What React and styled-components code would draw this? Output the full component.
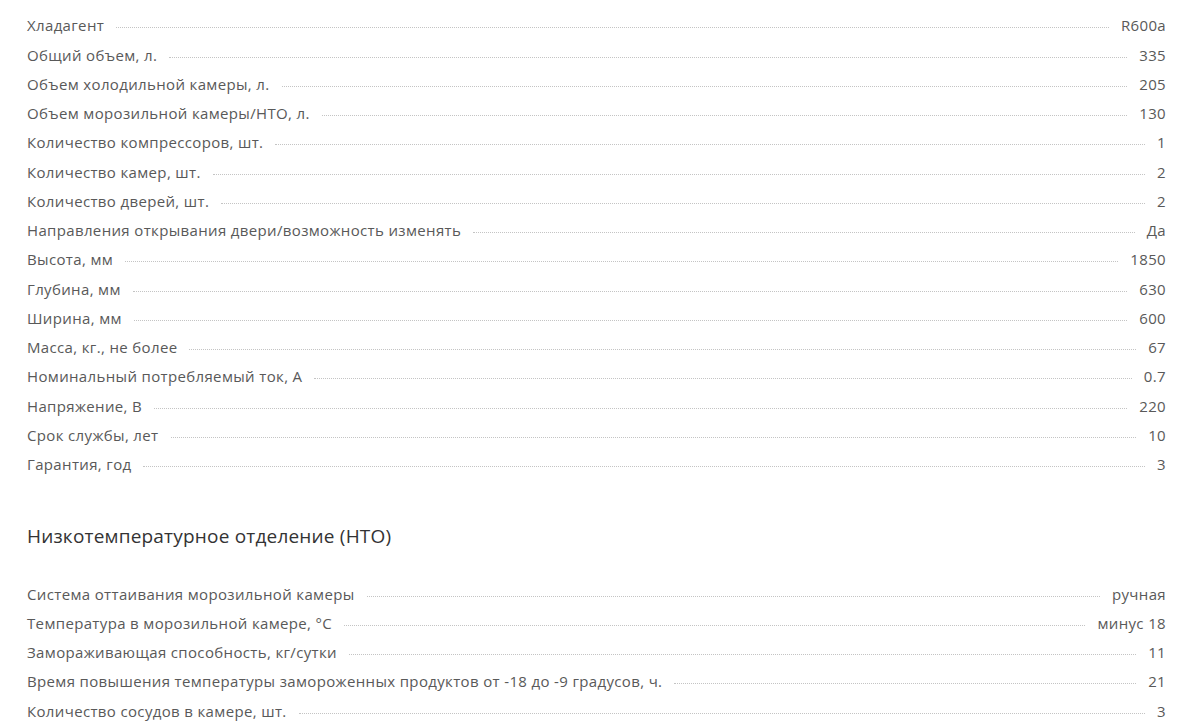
import React from 'react'
import styled, { createGlobalStyle } from 'styled-components'

const GlobalStyle = createGlobalStyle`
  body {
    margin: 0;
    background: #fff;
    font-family: "Open Sans", "Liberation Sans", sans-serif;
  }
`;

const mainSpecs = [
  ['Хладагент', 'R600a'],
  ['Общий объем, л.', '335'],
  ['Объем холодильной камеры, л.', '205'],
  ['Объем морозильной камеры/НТО, л.', '130'],
  ['Количество компрессоров, шт.', '1'],
  ['Количество камер, шт.', '2'],
  ['Количество дверей, шт.', '2'],
  ['Направления открывания двери/возможность изменять', 'Да'],
  ['Высота, мм', '1850'],
  ['Глубина, мм', '630'],
  ['Ширина, мм', '600'],
  ['Масса, кг., не более', '67'],
  ['Номинальный потребляемый ток, А', '0.7'],
  ['Напряжение, В', '220'],
  ['Срок службы, лет', '10'],
  ['Гарантия, год', '3'],
];

const freezerSpecs = [
  ['Система оттаивания морозильной камеры', 'ручная'],
  ['Температура в морозильной камере, °С', 'минус 18'],
  ['Замораживающая способность, кг/сутки', '11'],
  ['Время повышения температуры замороженных продуктов от -18 до -9 градусов, ч.', '21'],
  ['Количество сосудов в камере, шт.', '3'],
];

function SpecList({ items }) {
  return (
    <List>
      {items.map(([name, value]) => (
        <Row key={name}>
          <Name>{name}</Name>
          <Dots />
          <Value>{value}</Value>
        </Row>
      ))}
    </List>
  );
}

export default function App() {
  return (
    <Page>
      <GlobalStyle />
      <SpecList items={mainSpecs} />
      <SectionTitle>Низкотемпературное отделение (НТО)</SectionTitle>
      <SpecList items={freezerSpecs} />
    </Page>
  );
}

const Page = styled.div`
  padding: 6px 11px 0 27px;
`;

const List = styled.div`
  display: flex;
  flex-direction: column;
`;

const Row = styled.div`
  display: flex;
  align-items: flex-end;
  height: 29.28px;
  font-size: 15px;
  color: #595959;
  letter-spacing: 0.35px;
`;

const Name = styled.span`
  white-space: nowrap;
  line-height: 20px;
`;

const Value = styled.span`
  white-space: nowrap;
  line-height: 20px;
`;

const Dots = styled.span`
  flex: 1;
  margin: 0 12px 7px;
  border-bottom: 1px dotted #c4c4c4;
`;

const SectionTitle = styled.h3`
  margin: 49px 0 25px;
  font-size: 19px;
  font-weight: 400;
  color: #333;
  letter-spacing: 0.2px;
`;
